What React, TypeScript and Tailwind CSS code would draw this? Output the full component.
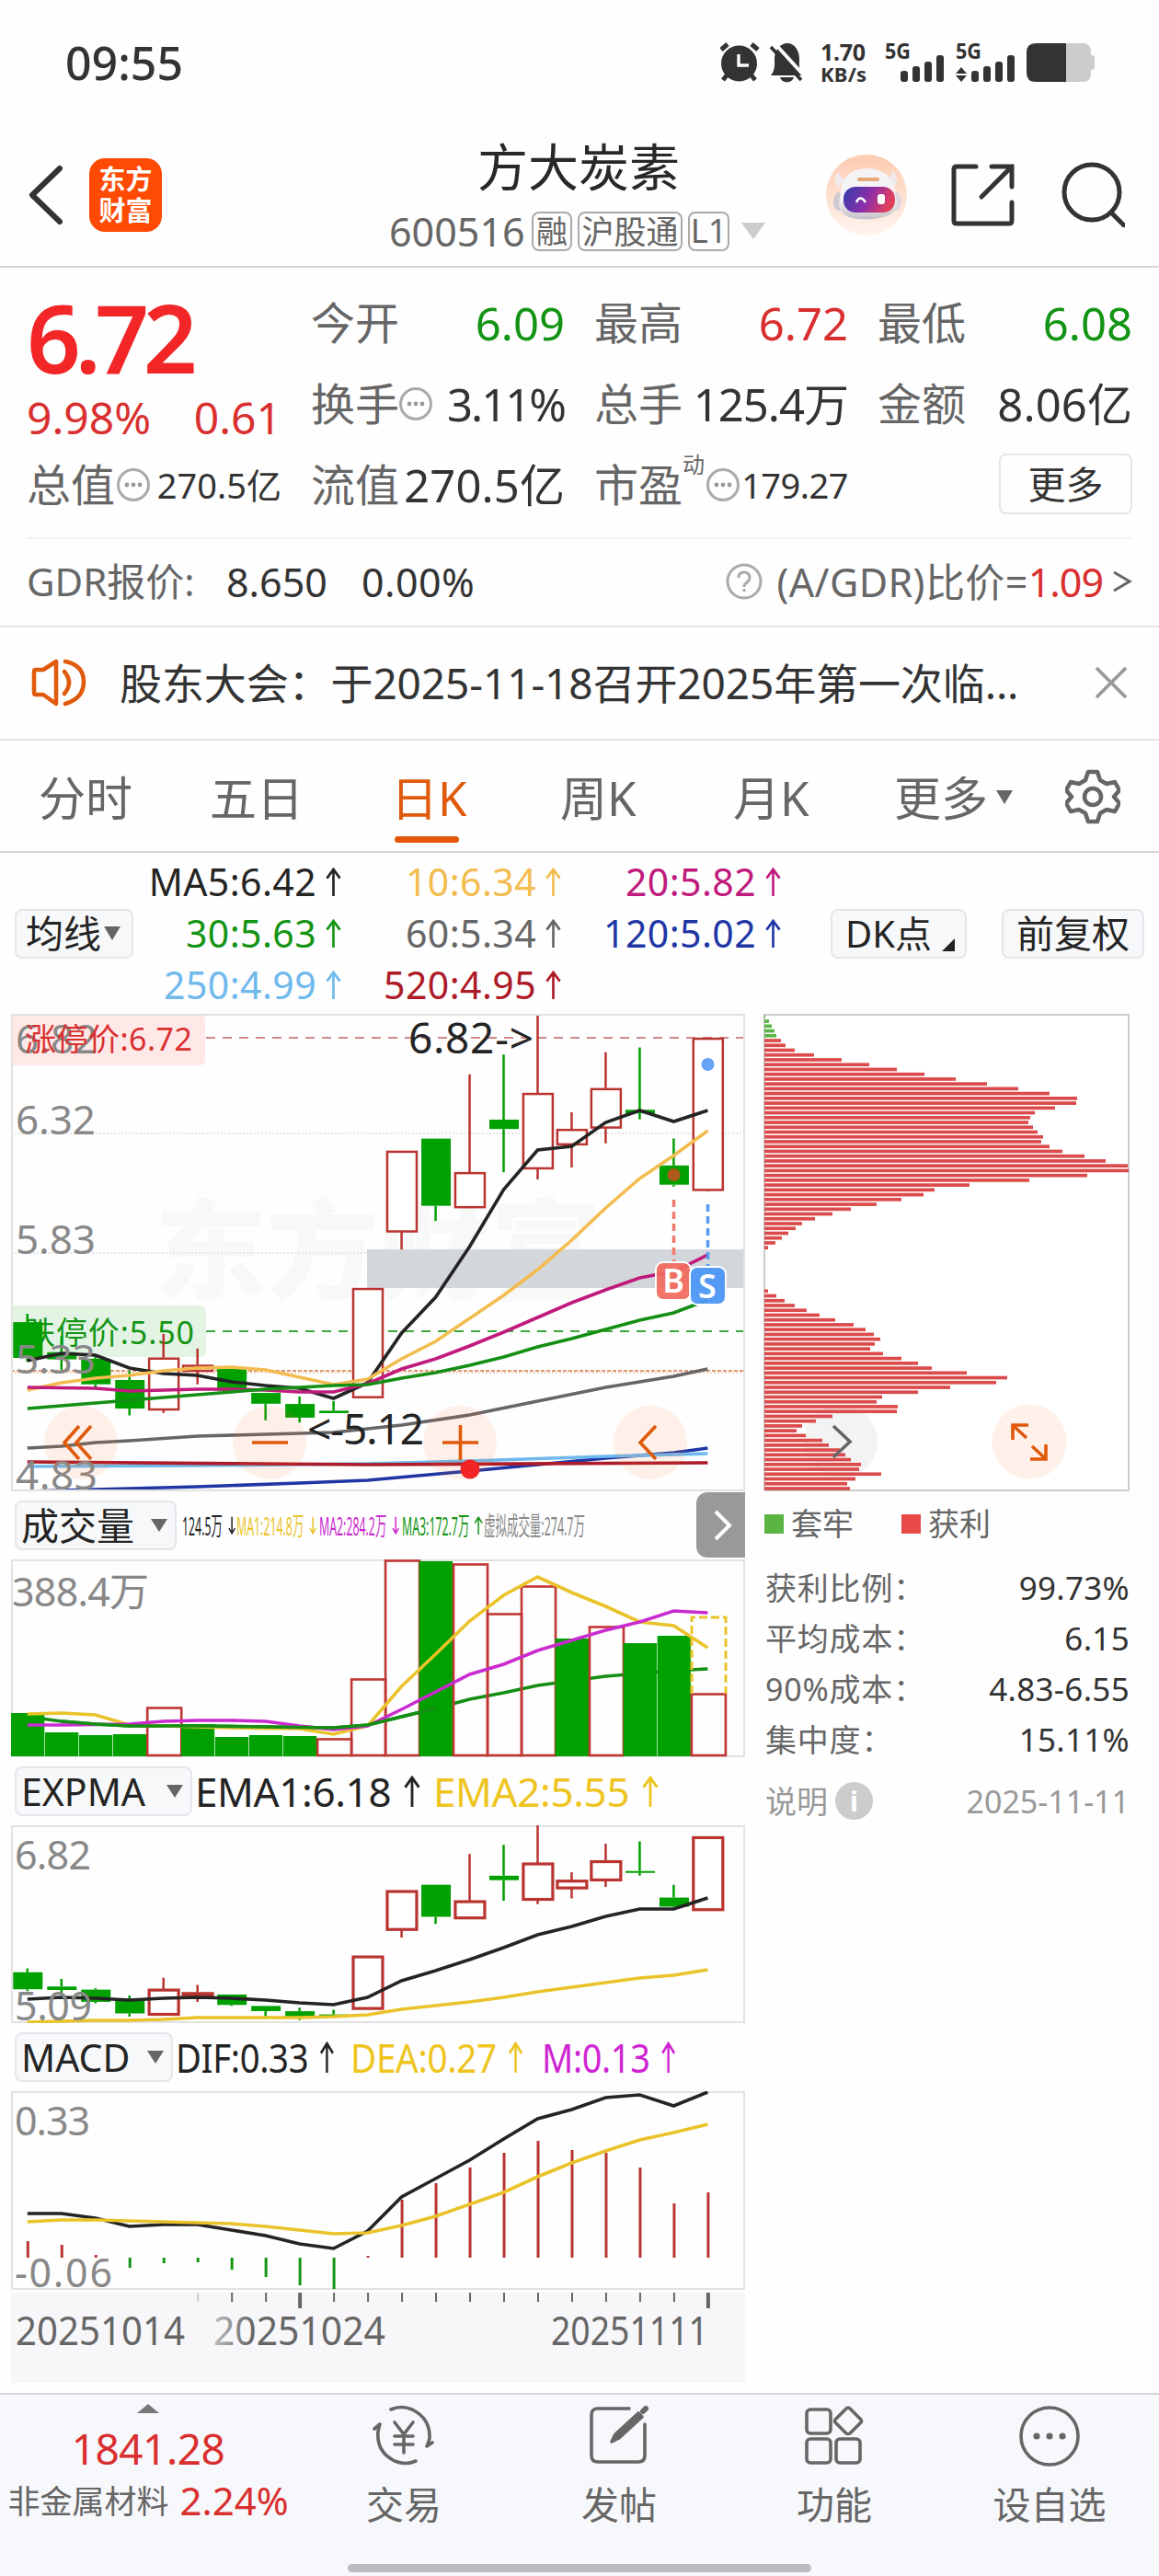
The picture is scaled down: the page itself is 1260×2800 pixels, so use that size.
import React from 'react';

type Point = [number, number];

// top and bottom are the body edges, "up" decides hollow or filled
type Candle = { up: boolean; high: number; top: number; bottom: number; low: number };

const STEP = 36.98;
const cx = (i: number) => 17.8 + STEP * i;

const candles: Candle[] = [
  { up: false, high: 5.57, top: 5.535, bottom: 5.386, low: 5.37 },
  { up: false, high: 5.476, top: 5.41, bottom: 5.38, low: 5.336 },
  { up: false, high: 5.396, top: 5.383, bottom: 5.276, low: 5.263 },
  { up: false, high: 5.332, top: 5.294, bottom: 5.175, low: 5.146 },
  { up: true, high: 5.486, top: 5.387, bottom: 5.175, low: 5.157 },
  { up: true, high: 5.425, top: 5.357, bottom: 5.336, low: 5.276 },
  { up: false, high: 5.34, top: 5.34, bottom: 5.249, low: 5.24 },
  { up: false, high: 5.24, top: 5.24, bottom: 5.195, low: 5.126 },
  { up: false, high: 5.225, top: 5.194, bottom: 5.137, low: 5.117 },
  { up: false, high: 5.206, top: 5.166, bottom: 5.156, low: 5.156 },
  { up: true, high: 5.677, top: 5.677, bottom: 5.226, low: 5.226 },
  { up: true, high: 6.249, top: 6.249, bottom: 5.917, low: 5.838 },
  { up: false, high: 6.3, top: 6.3, bottom: 6.02, low: 5.957 },
  { up: true, high: 6.568, top: 6.16, bottom: 6.018, low: 6.01 },
  { up: false, high: 6.65, top: 6.379, bottom: 6.34, low: 6.16 },
  { up: true, high: 6.82, top: 6.49, bottom: 6.18, low: 6.13 },
  { up: true, high: 6.41, top: 6.34, bottom: 6.28, low: 6.18 },
  { up: true, high: 6.66, top: 6.51, bottom: 6.35, low: 6.28 },
  { up: false, high: 6.68, top: 6.42, bottom: 6.405, low: 6.38 },
  { up: false, high: 6.3, top: 6.188, bottom: 6.108, low: 6.1 },
  { up: true, high: 6.72, top: 6.72, bottom: 6.09, low: 6.08 },
];

const maLines: { color: string; points: Point[] }[] = [
  { color: '#666', points: [[0, 472], [1, 470], [2, 466], [3, 464], [5, 459], [7, 457], [9, 455], [10, 451], [11, 447], [13, 436], [15, 421], [17, 406], [18, 400], [19, 394], [20, 386]] },
  { color: '#2136a5', points: [[0, 519], [3, 516], [5, 514], [8, 510], [10, 507], [13, 497], [15, 490], [17, 483], [19, 477], [20, 472]] },
  { color: '#6fb9ec', points: [[0, 492], [5, 491], [10, 489], [13, 486], [17, 481], [20, 478]] },
  { color: '#ad1a28', points: [[0, 487], [10, 490], [20, 488]] },
  { color: '#242424', points: [[0, 377], [1, 369], [2, 371], [3, 385], [4, 391], [5, 393], [6, 400], [7, 404], [8, 407], [9, 418], [10, 401], [11, 347], [12, 308], [13, 253], [14, 191], [15, 148], [16, 144], [17, 118], [18, 105], [19, 117], [20, 105]] },
  { color: '#f3bc4f', points: [[0, 409], [1, 401], [2, 396], [3, 393], [4, 388], [5, 385], [6, 384], [7, 387], [8, 395], [9, 403], [10, 397], [11, 375], [12, 356], [13, 331], [14, 306], [15, 278], [16, 246], [17, 211], [18, 179], [19, 154], [20, 127]] },
  { color: '#c01a7d', points: [[0, 406], [2, 407], [3, 410], [4, 409], [5, 408], [6, 408], [7, 409], [8, 411], [9, 411], [10, 402], [11, 386], [12, 375], [13, 361], [14, 346], [15, 330], [16, 314], [17, 300], [18, 287], [19, 280], [20, 262]] },
  { color: '#148f14', points: [[0, 429], [1, 426], [2, 423], [3, 420], [4, 417], [5, 414], [6, 411], [7, 408], [8, 406], [9, 404], [10, 403], [11, 396], [12, 390], [13, 382], [14, 373], [15, 362], [16, 353], [17, 343], [18, 333], [19, 325], [20, 311]] },
];

// bar heights, in chart units; positive is a buying day
const volumes = [-47, -26, -23, -24, 53, -35, -21, -23, -22, 19, 84, 213, -212, 209, 155, 185, -128, 141, -123, -131, 68];

const volLines: { color: string; points: Point[] }[] = [
  { color: '#eac32a', points: [[0, 168], [1, 167], [2, 169], [3, 180], [4, 181], [5, 182], [6, 183], [8, 184], [9, 190], [10, 181], [11, 138], [12, 103], [13, 67], [14, 39], [15, 19], [16, 36], [17, 51], [18, 68], [19, 72], [20, 96]] },
  { color: '#c92bcf', points: [[0, 180], [1, 180], [3, 179], [4, 176], [5, 175], [6, 175], [7, 176], [8, 181], [9, 185], [10, 181], [11, 163], [12, 144], [13, 125], [14, 114], [15, 99], [16, 88], [17, 77], [18, 68], [19, 56], [20, 58]] },
];
const volMa3: Point[] = [[0, 171], [1, 176], [2, 179], [3, 181], [5, 181], [7, 182], [9, 183], [10, 180], [11, 171], [12, 162], [13, 152], [14, 145], [15, 137], [16, 132], [17, 127], [18, 124], [19, 121], [20, 119]];

const ema1: Point[] = [[0, 189], [1, 187], [2, 188], [3, 190], [4, 188], [5, 187], [6, 188], [7, 190], [8, 193], [9, 195], [10, 187], [11, 169], [12, 158], [13, 146], [14, 133], [15, 119], [16, 110], [17, 99], [18, 91], [19, 91], [20, 79]];
const ema2: Point[] = [[0, 214], [2, 212], [3, 212], [4, 211], [5, 209], [8, 209], [9, 208], [10, 206], [11, 200], [13, 192], [14, 187], [15, 181], [16, 176], [17, 171], [18, 166], [19, 163], [20, 157]];

const dif: Point[] = [[0, 133], [1, 133], [2, 138], [3, 147], [4, 145], [5, 145], [6, 151], [7, 157], [8, 166], [9, 171], [10, 152], [11, 115], [12, 95], [13, 75], [14, 52], [15, 30], [16, 20], [17, 7], [18, 4], [19, 16], [20, 1]];
const dea: Point[] = [[0, 142], [1, 140], [2, 140], [3, 141], [6, 144], [7, 147], [8, 151], [9, 155], [10, 154], [11, 146], [12, 136], [13, 123], [14, 110], [15, 93], [16, 78], [17, 65], [18, 53], [19, 45], [20, 36]];
const macdBars = [18, 14, 3, -11, -6, -5, -13, -21, -30, -34, 2, 63, 81, 98, 114, 127, 117, 114, 98, 59, 71];

const trapped = [1, 5, 8, 11, 13];
const upperChips = [
  18, 23, 33, 54, 84, 114, 144, 174, 208, 242, 276, 310, 340, 339, 316, 294, 289, 287, 292, 297, 303, 301, 310, 324,
  348, 371, 395, 396, 351, 288, 223, 185, 173, 149, 122, 94, 74, 55, 41, 34, 26, 19, 12, 4,
];
const lowerChips = [
  4, 13, 22, 33, 46, 60, 77, 97, 110, 119, 126, 120, 115, 129, 149, 167, 182, 220, 264, 252, 202, 167, 128, 122, 145,
  144, 74, 56, 41, 35, 45, 63, 70, 82, 88, 94, 105, 103, 127, 99, 90, 93,
];

const GRAY = '#888';
const RED = '#b93430';
const GREEN = '#00a000';

const Line = ({ points, color, width = 3.6 }: { points: Point[]; color: string; width?: number }) => (
  <polyline points={points.map(([i, y]) => `${cx(i)},${y}`).join(' ')} fill="none" stroke={color} strokeWidth={width} />
);

const Candles = ({ toY, stroke }: { toY: (price: number) => number; stroke: number }) => (
  <>
    {candles.map((c, i) => {
      const x = cx(i);
      const top = toY(c.top);
      const height = Math.max(toY(c.bottom) - top, 2);
      const color = c.up ? RED : GREEN;
      return (
        <g key={i} stroke={color} strokeWidth={2.5}>
          <path d={`M${x} ${toY(c.high)}V${top}M${x} ${top + height}V${toY(c.low)}`} />
          {c.up ? (
            <rect x={x - 15.6} y={top + 1} width={32} height={height} fill="#fff" fillOpacity={height < 8 ? 0 : 1} strokeWidth={stroke} />
          ) : (
            <rect x={x - 15.5} y={top} width={32} height={height} fill={color} stroke="none" />
          )}
        </g>
      );
    })}
  </>
);

const Arrow = ({ down = false, className }: { down?: boolean; className: string }) => (
  <svg viewBox="0 0 18 32" preserveAspectRatio="none" className={`shrink-0 ${className}`} fill="none" stroke="currentColor" strokeWidth="2.8">
    {down ? <path d="M9 1v29M3 21l6 9 6-9" /> : <path d="M9 32V2M1.500 12L9 2l7.500 10" />}
  </svg>
);

const Dots = () => (
  <svg viewBox="0 0 36 36" className="h-9 w-9 shrink-0">
    <circle cx="18" cy="18" r="16.500" fill="none" stroke="#aaa" strokeWidth="3" />
    <g fill="#999">
      <circle cx="11" cy="18" r="2.4" />
      <circle cx="18" cy="18" r="2.4" />
      <circle cx="25" cy="18" r="2.4" />
    </g>
  </svg>
);

const Triangle = ({ className }: { className: string }) => (
  <svg viewBox="0 0 16 14" preserveAspectRatio="none" className={`shrink-0 ${className}`} fill="currentColor">
    <path d="M0 0h16L8 14z" />
  </svg>
);

const StatusBar = () => (
  <div className="flex h-[136px] items-start justify-between pl-[71px]">
    <span className="mt-[43px] text-[50px] leading-none font-medium text-[#333]">09:55</span>
    <svg viewBox="770 30 490 80" className="mt-[30px] h-[80px] w-[490px]" fill="#333">
      <circle cx="803.5" cy="69" r="19.5" />
      <path d="M784 54l7-6M824 54l-7-6M790 82l-4 5M817 82l4 5" stroke="#333" strokeWidth="5" />
      <path d="M803 59v12h11" fill="none" stroke="#fff" strokeWidth="3.4" />
      <path d="M838 82c5-6 4-12 4-18 0-9 6-17 14-17s13 8 13 17c0 6-1 12 4 18z" />
      <path d="M848 84h15c-2 7-13 7-15 0z" />
      <path d="M843 48l31 34" stroke="#fff" strokeWidth="4" />
      <path d="M838 51l33 36" stroke="#333" strokeWidth="3.6" />
      <g className="font-bold" fontSize="25" fill="#333">
        <text x="892" y="66" textLength="49">1.70</text>
        <text x="892" y="89" fontSize="22" textLength="50">KB/s</text>
        <text x="962" y="64" fontSize="23" textLength="28" lengthAdjust="spacingAndGlyphs">5G</text>
        <text x="1039" y="64" fontSize="23" textLength="28" lengthAdjust="spacingAndGlyphs">5G</text>
      </g>
      {[979, 992, 1005, 1018, 1056, 1069, 1082, 1095].map((x, i) => {
        const h = [12, 17, 22, 29][i % 4];
        return <rect key={x} x={x} y={89 - h} width="8" height={h} rx="3" />;
      })}
      <path d="M1045 73l6 7h-12zM1045 89l6-7h-12z" />
      <path d="M1159 47h18q9 0 9 9v4q4 0 4 3v10q0 3-4 3v4q0 9-9 9h-18z" fill="#ccc" />
      <path d="M1159 47h-33q-10 0-10 10v22q0 10 10 10h33z" />
    </svg>
  </div>
);

const RobotAvatar = () => (
  <svg viewBox="0 0 88 88" className="h-[88px] w-[88px]">
    <defs>
      <linearGradient id="avatarBg" x1="0" y1="0" x2="0" y2="1">
        <stop offset="0" stopColor="#fdcbb0" />
        <stop offset="1" stopColor="#fff5f0" />
      </linearGradient>
      <linearGradient id="visor" x1="0" y1="0" x2="1" y2="0.25">
        <stop offset="0" stopColor="#2f3cad" />
        <stop offset="0.55" stopColor="#8b2fa8" />
        <stop offset="1" stopColor="#e23f5c" />
      </linearGradient>
      <linearGradient id="shell" x1="0" y1="0" x2="0" y2="1">
        <stop offset="0.6" stopColor="#f5f3f5" />
        <stop offset="1" stopColor="#c4c0c8" />
      </linearGradient>
    </defs>
    <circle cx="44" cy="44" r="44" fill="url(#avatarBg)" />
    <path d="M14 18q-8 8-1 17l8-7q-7-3-7-10zM72 18q9 8 2 17l-8-7q6-3 6-10z" fill="#eeeaee" />
    <ellipse cx="14" cy="51" rx="6" ry="10" fill="#cfcbd1" />
    <ellipse cx="76" cy="51" rx="6" ry="10" fill="#dedadf" />
    <path d="M16 40q2-24 28-25 28 1 31 25l2 15q-2 10-14 13-20 5-38 0-10-3-11-14z" fill="url(#shell)" />
    <rect x="34" y="25" width="24" height="4" rx="2" fill="#e5a878" />
    <rect x="19" y="35" width="56" height="28" rx="13" fill="url(#visor)" />
    <path d="M33 52q4-9 10 0" fill="none" stroke="#fff" strokeWidth="2.5" />
    <rect x="56" y="43" width="8" height="11" rx="3" fill="#fff" />
  </svg>
);

const Header = () => (
  <header className="flex h-[155px] border-b-2 border-[#d6d6d6] text-[#333]">
    <div className="flex w-[423px] items-start pt-[36px] pl-[31px]">
      <svg viewBox="0 0 38 66" className="mt-[7px] h-[66px] w-[38px]" fill="none" stroke="currentColor" strokeWidth="6" strokeLinecap="round" strokeLinejoin="round">
        <path d="M34 4L4 33l30 29" />
      </svg>
      <div className="ml-[28px] flex h-[80px] w-[79px] flex-col items-center justify-center rounded-[17px] bg-[#fe4a02] text-[29px] leading-[34px] font-bold text-white">
        <span>东方</span>
        <span>财富</span>
      </div>
    </div>
    <div className="w-[412px]">
      <h1 className="mt-[15px] text-center text-[55px] leading-[60px] text-[#282828]">方大炭素</h1>
      <div className="mt-[18px] flex h-[44px] items-center text-[#666]">
        <span className="w-[155px] text-[43px] leading-none">600516</span>
        <span className="flex h-[43px] w-[44px] items-center justify-center rounded-lg border-2 border-[#aaa] text-[34px] leading-none">融</span>
        <span className="ml-[6px] flex h-[43px] w-[114px] items-center justify-center rounded-lg border-2 border-[#aaa] text-[35px] leading-none">沪股通</span>
        <span className="ml-[6px] flex h-[43px] w-[45px] items-center justify-center rounded-lg border-2 border-[#aaa] text-[36px] leading-none">L1</span>
        <Triangle className="ml-[13px] h-[18px] w-[26px] text-[#ccc]" />
      </div>
    </div>
    <div className="flex items-start pt-[32px] pl-[63px]">
      <RobotAvatar />
      <svg viewBox="0 0 70 70" className="mt-[9px] ml-[48px] h-[70px] w-[70px]" fill="none" stroke="currentColor" strokeWidth="5" strokeLinecap="round">
        <path d="M27 4H6q-3 0-3 3v56q0 3 3 3h57q3 0 3-3V43M44 4h22v22M66 4L33 37" />
      </svg>
      <svg viewBox="0 0 70 72" className="mt-[7px] ml-[49px] h-[72px] w-[70px]" fill="none" stroke="currentColor" strokeWidth="5" strokeLinecap="round">
        <circle cx="34" cy="34" r="30" />
        <path d="M55 56l14 14" />
      </svg>
    </div>
  </header>
);

const Stat = ({ label, value, color = 'text-[#333] tracking-[0.1px]', note }: { label: string; value: string; color?: string; note?: boolean }) => (
  <div className="flex items-center justify-between whitespace-nowrap">
    <span className="flex items-center text-[48px] text-[#666]">
      {label}
      {note && <Dots />}
    </span>
    <span className={`text-[49px] ${color}`}>{value}</span>
  </div>
);

const Quote = () => (
  <section className="grid h-[293px] grid-cols-[277px_276px_276px_277px] grid-rows-[88px_88px_88px] gap-x-8 px-[29px] pt-[16px] leading-none">
    <div className="row-span-2 flex flex-col text-[#d92f2f]">
      <span className="mt-[7px] text-[103px] leading-[104px] font-semibold tracking-[-6.5px] text-[#f22626]">6.72</span>
      <div className="mt-[12px] flex justify-between text-[48px]">
        <span>9.98%</span>
        <span>0.61</span>
      </div>
    </div>
    <Stat label="今开" value="6.09" color="text-[#149414]" />
    <Stat label="最高" value="6.72" color="text-[#d92f2f]" />
    <Stat label="最低" value="6.08" color="text-[#149414]" />
    <Stat label="换手" value="3.11%" color="text-[#333] tracking-[-2px]" note />
    <Stat label="总手" value="125.4万" color="text-[#333] tracking-[-1px]" />
    <Stat label="金额" value="8.06亿" />
    <div className="flex items-center justify-between whitespace-nowrap">
      <span className="flex items-center gap-[2px] text-[48px] text-[#666]">
        总值
        <Dots />
      </span>
      <span className="text-[38px] text-[#333]">270.5亿</span>
    </div>
    <Stat label="流值" value="270.5亿" />
    <div className="flex items-center justify-between whitespace-nowrap">
      <span className="flex items-center text-[48px] text-[#666]">
        市盈
        <sup className="-top-[22px] mr-[2px] text-[24px]">动</sup>
        <Dots />
      </span>
      <span className="text-[38px] tracking-[-0.5px] text-[#333]">179.27</span>
    </div>
    <button className="mb-[2px] flex h-[66px] w-[145px] items-center justify-center self-center justify-self-end rounded-lg border-2 border-[#e6e6e6] text-[41px] text-[#333]">
      更多
    </button>
  </section>
);

const GdrRow = () => (
  <section className="mx-[29px] flex h-[96px] items-center justify-between border-t-2 border-[#f3f3f3] pb-[2px] text-[42px] leading-none text-[#333]">
    <div className="flex items-center">
      <span className="w-[217px] whitespace-nowrap text-[#666]">GDR报价:</span>
      <span className="w-[147px] text-[43px]">8.650</span>
      <span className="text-[43px] tracking-[0.4px]">0.00%</span>
    </div>
    <div className="flex items-center text-[43px] text-[#666]">
      <svg viewBox="0 0 40 40" className="mr-[15px] h-10 w-10" fill="none" stroke="#aaa" strokeWidth="3">
        <circle cx="20" cy="20" r="18" />
        <path d="M14 16q0-6 6-6t6 6q0 3-4 6-2 1-2 4M20 28v3" />
      </svg>
      <span className="tracking-[0.4px]">(A/GDR)比价=</span>
      <span className="tracking-[-1px] text-[#d92f2f]">1.09</span>
      <svg viewBox="0 0 22 24" className="ml-[10px] h-[24px] w-[22px]" fill="none" stroke="currentColor" strokeWidth="3">
        <path d="M2 2l17 10L2 22" />
      </svg>
    </div>
  </section>
);

const Notice = () => (
  <section className="flex h-[125px] items-center border-y-2 border-[#e4e4e4] pb-[2px] pl-[34px] text-[#333]">
    <svg viewBox="0 0 62 52" className="h-[52px] w-[62px]" fill="none" stroke="#e05a0c" strokeWidth="4.5" strokeLinejoin="round" strokeLinecap="round">
      <path d="M3 14q0-2 2-2h8L27 3v46L13 39H5q-2 0-2-2z" />
      <path d="M36 14q10 12 0 24M37 3q20 4 20 22T37 49" />
    </svg>
    <span className="ml-[34px] w-[1000px] text-[46px] leading-none tracking-[-0.1px] whitespace-nowrap">股东大会：于2025-11-18召开2025年第一次临...</span>
    <svg viewBox="0 0 36 36" className="ml-[60px] h-[36px] w-[36px]" stroke="#999" strokeWidth="3.8">
      <path d="M2 2l32 32M34 2L2 34" />
    </svg>
  </section>
);

const periods = [
  { label: '分时', className: 'ml-[42px] w-[186px]' },
  { label: '五日', className: 'w-[197px]' },
  { label: '日K', className: 'w-[184px]', active: true },
  { label: '周K', className: 'w-[188px]' },
  { label: '月K', className: 'w-[175px]' },
  { label: '更多', className: 'w-[111px]' },
];

const PeriodTabs = () => (
  <nav className="flex h-[122px] border-b-2 border-[#d6d6d6] text-[51px] leading-none text-[#666]">
    {periods.map((p) => (
      <div key={p.label} className={`pt-[37px] whitespace-nowrap ${p.className}`}>
        <span className={p.active ? 'text-[#e05a0c]' : ''}>{p.label}</span>
        {p.active && <div className="mt-[16px] ml-[4px] h-[7px] w-[70px] rounded-full bg-[#e3560a]" />}
      </div>
    ))}
    <Triangle className="mt-[54px] h-[15px] w-[18px]" />
    <svg viewBox="0 0 60 60" className="mt-[31px] ml-[57px] h-[60px] w-[60px]" fill="none" stroke="currentColor" strokeWidth="4.5" strokeLinejoin="round">
      <path d="M25 3h10l3 9 7 4 9-2 5 9-6 7 6 7-5 9-9-2-7 4-3 9H25l-3-9-7-4-9 2-5-9 6-7-6-7 5-9 9 2 7-4z" />
      <circle cx="30" cy="30" r="9" />
    </svg>
  </nav>
);

const averages = [
  { text: 'MA5:6.42', color: 'text-[#242424]' },
  { text: '10:6.34', color: 'text-[#f3bc4f]' },
  { text: '20:5.82', color: 'text-[#c01a7d]' },
  { text: '30:5.63', color: 'text-[#149414]' },
  { text: '60:5.34', color: 'text-[#666]' },
  { text: '120:5.02', color: 'text-[#2136a5]' },
  { text: '250:4.99', color: 'text-[#6fb9ec]' },
  { text: '520:4.95', color: 'text-[#ad1a28]' },
];

const Averages = () => (
  <section className="flex h-[175px] items-center pl-[16px] leading-none text-[#242424]">
    <button className="flex h-[54px] w-[129px] items-center rounded-lg border-2 border-[#e4e6ea] bg-[#f7f8fa] pl-[10px] text-[41px]">
      均线
      <Triangle className="ml-[3px] h-[15px] w-[18px] text-[#666]" />
    </button>
    <div className="grid h-[169px] w-[704px] grid-cols-[226px_239px_239px]">
      {averages.map((a) => (
        <div key={a.text} className={`flex items-center justify-end text-[41px] ${a.color}`}>
          <span className="tracking-[0.4px] whitespace-nowrap">{a.text}</span>
          <Arrow className="ml-[10px] h-[31px] w-[17px]" />
        </div>
      ))}
    </div>
    <button className="ml-[54px] flex h-[54px] w-[148px] items-center rounded-lg border-2 border-[#e4e6ea] bg-[#f7f8fa] pl-[14px] text-[40px] whitespace-nowrap">
      DK点
      <svg viewBox="0 0 14 14" className="mt-[24px] ml-[11px] h-[14px] w-[14px] shrink-0" fill="#222">
        <path d="M14 0v14H0z" />
      </svg>
    </button>
    <button className="ml-[38px] flex h-[54px] w-[155px] items-center justify-center rounded-lg border-2 border-[#e4e6ea] bg-[#f7f8fa] text-[41px] whitespace-nowrap">
      前复权
    </button>
  </section>
);

const KChart = () => (
  <svg viewBox="0 0 798 519" className="h-[519px] w-[798px]" fontSize="44">
    <g className="font-black" fontSize="118" fill="#f8f8f8">
      <text x="156" y="301" textLength="486" lengthAdjust="spacingAndGlyphs">东方财富</text>
    </g>
    <g stroke="#ddd" strokeWidth="1.5" strokeDasharray="2 2">
      <path d="M0 130H798M0 260H798" />
      <path d="M0 390H798" stroke="#eec7ad" />
    </g>
    <rect x="387" y="256" width="411" height="42" fill="#d3d6db" />
    <rect x="-8" y="0" width="219" height="56" rx="6" fill="#ffe8e8" />
    <rect x="-8" y="317" width="220" height="56" rx="6" fill="#e3f4e5" />
    <path d="M212 26H798" stroke="#d08888" strokeWidth="2" strokeDasharray="10 8" />
    <path d="M212 345H798" stroke="#3aa83a" strokeWidth="2" strokeDasharray="10 8" />
    <path d="M0 388H798" stroke="#dc9a74" strokeWidth="2" strokeDasharray="4 2" />
    <text x="5" y="43" fill={GRAY} textLength="89">6.82</text>
    <text x="15" y="40" fontSize="34" fill="#d92f2f" textLength="182">涨停价:6.72</text>
    <text x="14" y="359" fontSize="34" fill="#149414" textLength="185">跌停价:5.50</text>
    <Candles toY={(p) => (6.82 - p) * 260.8} stroke={2.5} />
    {maLines.map((l) => (
      <Line key={l.color} points={l.points} color={l.color} />
    ))}
    <g fill={GRAY}>
      <text x="5" y="131" textLength="87">6.32</text>
      <text x="5" y="261" textLength="87">5.83</text>
      <text x="5" y="391" textLength="87">5.33</text>
      <text x="5" y="517" textLength="89">4.83</text>
    </g>
    <g fill="#242424" fontSize="46">
      <text x="432" y="43" textLength="136">{'6.82->'}</text>
      <text x="322" y="468" textLength="127">{'<-5.12'}</text>
    </g>
    <circle cx="757.5" cy="55" r="7" fill="#66a2f7" />
    <circle cx="720.5" cy="175" r="7" fill="#ae5a1c" />
    <path d="M720.5 202V270" stroke="#f07a6e" strokeWidth="3.5" strokeDasharray="8 5" />
    <path d="M757.5 207V274" stroke="#559af4" strokeWidth="3.5" strokeDasharray="8 5" />
    <g stroke="#fff" strokeWidth="2">
      <rect x="701" y="270" width="38" height="41" rx="8" fill="#f2695c" fillOpacity="0.92" />
      <rect x="738" y="275" width="39" height="41" rx="8" fill="#4d97f5" fillOpacity="0.95" />
    </g>
    <g className="font-semibold" fill="#fff" fontSize="36" textAnchor="middle">
      <text x="720" y="303">B</text>
      <text x="757" y="309">S</text>
    </g>
    <g fill="#ff7a2e" fillOpacity="0.1">
      <circle cx="76" cy="466" r="40" />
      <circle cx="281" cy="466" r="40" />
      <circle cx="488" cy="466" r="40" />
      <circle cx="695" cy="466" r="40" />
    </g>
    <g fill="none" stroke="#e05a0c" strokeWidth="3.6">
      <path d="M74 448L58 466l16 18M87 448L71 466l16 18" />
      <path d="M262 466h39M469 466h39M488.500 447v38" />
      <path d="M701 448L684 466l17 18" />
    </g>
    <circle cx="499" cy="495" r="10.500" fill="#f22424" />
    <rect x="1" y="1" width="796" height="517" fill="none" stroke="#e2e2e2" strokeWidth="2" />
  </svg>
);

const Indicator = ({ name, width, children }: { name: string; width: string; children: React.ReactNode }) => (
  <div className="flex h-[74px] items-center pl-[4px] leading-none text-[#242424]">
    <button className={`flex h-[54px] shrink-0 items-center justify-between rounded-lg border-2 border-[#e4e6ea] bg-[#f7f8fa] pr-[8px] pl-[5px] text-[41px] ${width}`}>
      {name}
      <Triangle className="h-[14px] w-[18px] text-[#666]" />
    </button>
    {children}
  </div>
);

const Reading = ({ text, color = '', width, scale = '' }: { text: string; color?: string; width: string; scale?: string }) => (
  <span className={`text-[44px] whitespace-nowrap ${color} ${width}`}>
    <span className={`flex w-max origin-left items-center ${scale}`}>
      <span className="tracking-[-0.4px]">{text}</span>
      <Arrow className="ml-[14px] h-[34px] w-[18px]" />
    </span>
  </span>
);

const smallReadings = [
  { text: '124.5万', color: 'text-[#242424]', width: 'w-[59px]', down: true },
  { text: 'MA1:214.8万', color: 'text-[#eac32a]', width: 'w-[90px]', down: true },
  { text: 'MA2:284.2万', color: 'text-[#c92bcf]', width: 'w-[90px]', down: true },
  { text: 'MA3:172.7万', color: 'text-[#149414]', width: 'w-[89px]', down: false },
];

const VolumeHeader = () => (
  <div className="relative">
    <Indicator name="成交量" width="w-[176px]">
      <div className="flex pl-[6px] text-[28px]">
        {smallReadings.map((r) => (
          <span key={r.text} className={`${r.color} ${r.width}`}>
            <span className="flex w-max origin-left scale-x-[0.44] items-center">
              {r.text}
              <Arrow down={r.down} className="ml-[12px] h-[20px] w-[22px]" />
            </span>
          </span>
        ))}
        <span className="w-[120px] text-[#888]">
          <span className="block w-max origin-left scale-x-[0.445]">虚拟成交量:274.7万</span>
        </span>
      </div>
    </Indicator>
    <button className="absolute top-[1px] right-0 flex h-[71px] w-[53px] items-center justify-center rounded-l-xl bg-[#999]">
      <svg viewBox="0 0 20 34" className="ml-1 h-[34px] w-[20px]" fill="none" stroke="#fff" strokeWidth="4">
        <path d="M2 2l15 15L2 32" />
      </svg>
    </button>
  </div>
);

const VolumeChart = () => (
  <svg viewBox="0 0 798 215" className="h-[215px] w-[798px]">
    <rect x="1" y="1" width="796" height="213" fill="none" stroke="#e2e2e2" strokeWidth="2" />
    <Line points={volMa3} color="#148f14" />
    {volumes.map((v, i) =>
      v > 0 ? (
        <rect key={i} x={cx(i) - 17.5} y={214.5 - v} width="37" height={v - 1.5} fill="none" stroke="#c03633" strokeWidth="2.6" />
      ) : (
        <rect key={i} x={cx(i) - 17.8} y={214 + v} width="36.3" height={-v} fill={GREEN} />
      ),
    )}
    <path d="M740 146V63h37v83" fill="none" stroke="#eac32a" strokeWidth="3" strokeDasharray="9 4" />
    {volLines.map((l) => (
      <Line key={l.color} points={l.points} color={l.color} />
    ))}
    <Line points={volMa3.slice(1, 10)} color="#148f14" />
    <text x="1" y="51" fontSize="43" fill={GRAY} textLength="149">388.4万</text>
  </svg>
);

const ExpmaChart = () => (
  <svg viewBox="0 0 798 215" className="h-[215px] w-[798px]">
    <rect x="1" y="1" width="796" height="213" fill="none" stroke="#e2e2e2" strokeWidth="2" />
    <Candles toY={(p) => (6.82 - p) * 124.3} stroke={3.2} />
    <Line points={ema1} color="#242424" />
    <Line points={ema2} color="#eac32a" />
    <g fill={GRAY} fontSize="43">
      <text x="4" y="48" textLength="83">6.82</text>
      <text x="4" y="212" textLength="84">5.09</text>
    </g>
  </svg>
);

const MacdChart = () => (
  <svg viewBox="0 0 798 216" className="h-[216px] w-[798px]">
    <rect x="1" y="1" width="796" height="214" fill="none" stroke="#e2e2e2" strokeWidth="2" />
    <Line points={dif} color="#242424" />
    {macdBars.map((v, i) => (
      <path key={i} d={`M${cx(i) + 0.5} 181V${181 - v}`} stroke={v > 0 ? RED : '#149414'} strokeWidth="3" />
    ))}
    <Line points={dea} color="#eac32a" />
    <g fill={GRAY} fontSize="43">
      <text x="4" y="48" textLength="82">0.33</text>
      <text x="4" y="213" textLength="106">-0.06</text>
    </g>
  </svg>
);

const DateAxis = () => (
  <svg viewBox="0 0 798 98" className="mt-[3px] h-[98px] w-[798px]">
    <defs>
      <linearGradient id="dateFade" gradientUnits="userSpaceOnUse" x1="212" x2="262" y1="0" y2="0">
        <stop offset="0" stopColor="#ccc" />
        <stop offset="1" stopColor="#666" />
      </linearGradient>
    </defs>
    <rect width="798" height="98" fill="#f7f7fa" />
    {Array.from({ length: 16 }, (_, k) => k + 5).map((i) => {
      const major = i === 8 || i === 20;
      return (
        <path key={i} d={`M${cx(i) + 0.5} 0v${major ? 17 : 10}`} stroke={i === 5 ? '#ccc' : '#666'} strokeWidth={major ? 4 : 2} />
      );
    })}
    <g fill="#666" fontSize="43">
      <text x="5" y="57" textLength="184" lengthAdjust="spacingAndGlyphs">20251014</text>
      <text x="220" y="57" textLength="187" lengthAdjust="spacingAndGlyphs" fill="url(#dateFade)">20251024</text>
      <text x="587" y="57" textLength="171" lengthAdjust="spacingAndGlyphs">20251111</text>
    </g>
  </svg>
);

const Chips = ({ data, from, color }: { data: number[]; from: number; color: string }) => (
  <>
    {data.map((w, i) => (
      <rect key={i} x="1" y={1 + (from + i) * 5.236} width={w} height="3.7" fill={color} />
    ))}
  </>
);

const ChipChart = () => (
  <svg viewBox="0 0 398 519" className="h-[519px] w-[398px]">
    <rect x="1" y="1" width="396" height="517" fill="#fff" stroke="#ccc" strokeWidth="2" />
    <circle cx="84" cy="465" r="40" fill="#f3f3f3" />
    <Chips data={trapped} from={0} color="#5cb543" />
    <Chips data={upperChips} from={5} color="#dc4b4b" />
    <Chips data={lowerChips} from={57} color="#dc4b4b" />
    <path d="M76 448l18 17-18 17" fill="none" stroke="#666" strokeWidth="3.6" />
    <circle cx="289" cy="465" r="40.500" fill="#fff1e9" />
    <path d="M271 463v-16h17M272 448l14 13M307 468v16h-17M306 483l-14-13" fill="none" stroke="#e05a0c" strokeWidth="3.6" />
  </svg>
);

const costs = [
  { label: '获利比例：', value: '99.73%' },
  { label: '平均成本：', value: '6.15' },
  { label: '90%成本：', value: '4.83-6.55' },
  { label: '集中度：', value: '15.11%' },
];

const ChipPanel = () => (
  <aside className="ml-[20px] w-[398px] text-[34px] leading-none text-[#666]">
    <ChipChart />
    <div className="flex h-[70px] items-center">
      <span className="mr-[8px] ml-px h-[21px] w-[21px] bg-[#5cb543]" />
      套牢
      <span className="mr-[8px] ml-[52px] h-[21px] w-[21px] bg-[#e84a4a]" />
      获利
    </div>
    <div className="mt-[7px] pl-[2px]">
      {costs.map((c) => (
        <div key={c.label} className="flex h-[55px] items-center justify-between whitespace-nowrap">
          <span className="tracking-[0.8px]">{c.label}</span>
          <span className="text-[35px] tracking-[0.3px] text-[#333]">{c.value}</span>
        </div>
      ))}
    </div>
    <div className="mt-[12px] flex h-[55px] items-center justify-between pl-[2px] text-[#999]">
      <span className="flex items-center">
        说明
        <span className="ml-[8px] flex h-[41px] w-[41px] items-center justify-center rounded-full bg-[#ccc] text-[30px] font-bold text-white">i</span>
      </span>
      <span>2025-11-11</span>
    </div>
  </aside>
);

const navItems = [
  {
    label: '交易',
    icon: (
      <>
        <path d="M21 6q11-5 23 0 20 10 19 31-1 5-3 9l6-4M48 62q-11 5-23 0Q5 52 7 30q1-5 2-8l-6 5" />
        <path d="M25 20l10 13 10-13M35 33v20M25 35h20M25 44h20" />
      </>
    ),
  },
  {
    label: '发帖',
    icon: (
      <>
        <path d="M46 5H12q-7 0-7 7v44q0 7 7 7h44q7 0 7-7V22" />
        <path d="M27 41l4-8 25-23 4 4-25 23z" fill="#666" />
        <path d="M61 8l3-3" strokeWidth="6" />
      </>
    ),
  },
  {
    label: '功能',
    icon: (
      <>
        <rect x="5" y="6" width="26" height="26" rx="4" />
        <rect x="5" y="38" width="26" height="26" rx="4" />
        <rect x="37" y="38" width="26" height="26" rx="4" />
        <path d="M50 4q1 0 2 1l12 12q1 2 0 3L52 32q-2 1-4 0L36 20q-1-1 0-3L48 5q1-1 2-1z" />
      </>
    ),
  },
  {
    label: '设自选',
    icon: (
      <>
        <circle cx="35" cy="35" r="31" />
        <g fill="#666" stroke="none">
          <circle cx="21" cy="35" r="3.6" />
          <circle cx="35" cy="35" r="3.6" />
          <circle cx="49" cy="35" r="3.6" />
        </g>
      </>
    ),
  },
];

const BottomNav = () => (
  <footer className="h-[199px] border-t-2 border-[#d4d5d8] bg-[#f7f8fb] leading-none text-[#666]">
    <div className="flex h-[182px]">
      <div className="flex w-[322px] flex-col items-center pt-[10px]">
        <Triangle className="h-[10px] w-[24px] rotate-180 text-[#777]" />
        <span className="mt-[15px] text-[46px] tracking-[-0.5px] text-[#d92f2f]">1841.28</span>
        <div className="mt-[13px] flex items-center gap-[12px] whitespace-nowrap">
          <span className="text-[35px]">非金属材料</span>
          <span className="text-[42px] text-[#d92f2f]">2.24%</span>
        </div>
      </div>
      {navItems.map((item) => (
        <div key={item.label} className="flex w-[234px] flex-col items-center pt-[10px]">
          <svg viewBox="0 0 70 70" className="h-[70px] w-[70px]" fill="none" stroke="#666" strokeWidth="3.6" strokeLinecap="round" strokeLinejoin="round">
            {item.icon}
          </svg>
          <span className="mt-[19px] text-[41px]">{item.label}</span>
        </div>
      ))}
    </div>
    <div className="mx-auto mt-[2px] h-[9px] w-[504px] rounded-full bg-[#bbbcbf]" />
  </footer>
);

const App = () => {
  return (
    <div className="flex h-[2800px] w-[1260px] flex-col overflow-hidden bg-[#fefefe] font-['Noto_Sans','Noto_Sans_CJK_SC',sans-serif]">
      <StatusBar />
      <Header />
      <Quote />
      <GdrRow />
      <Notice />
      <PeriodTabs />
      <Averages />
      <main className="flex h-[1499px] pl-[12px]">
        <div className="flex w-[798px] flex-col">
          <KChart />
          <VolumeHeader />
          <VolumeChart />
          <Indicator name="EXPMA" width="w-[193px]">
            <Reading text="EMA1:6.18" width="w-[262px] pl-[3px]" />
            <Reading text="EMA2:5.55" color="text-[#eec41f]" width="w-[260px]" />
          </Indicator>
          <ExpmaChart />
          <Indicator name="MACD" width="w-[172px]">
            <Reading text="DIF:0.33" width="w-[193px] pl-[3px]" scale="scale-x-[0.87]" />
            <Reading text="DEA:0.27" color="text-[#eec41f]" width="w-[208px]" scale="scale-x-[0.88]" />
            <Reading text="M:0.13" color="text-[#cf25d3]" width="w-[160px]" scale="scale-x-[0.86]" />
          </Indicator>
          <MacdChart />
          <DateAxis />
        </div>
        <ChipPanel />
      </main>
      <BottomNav />
    </div>
  );
};

export default App;
